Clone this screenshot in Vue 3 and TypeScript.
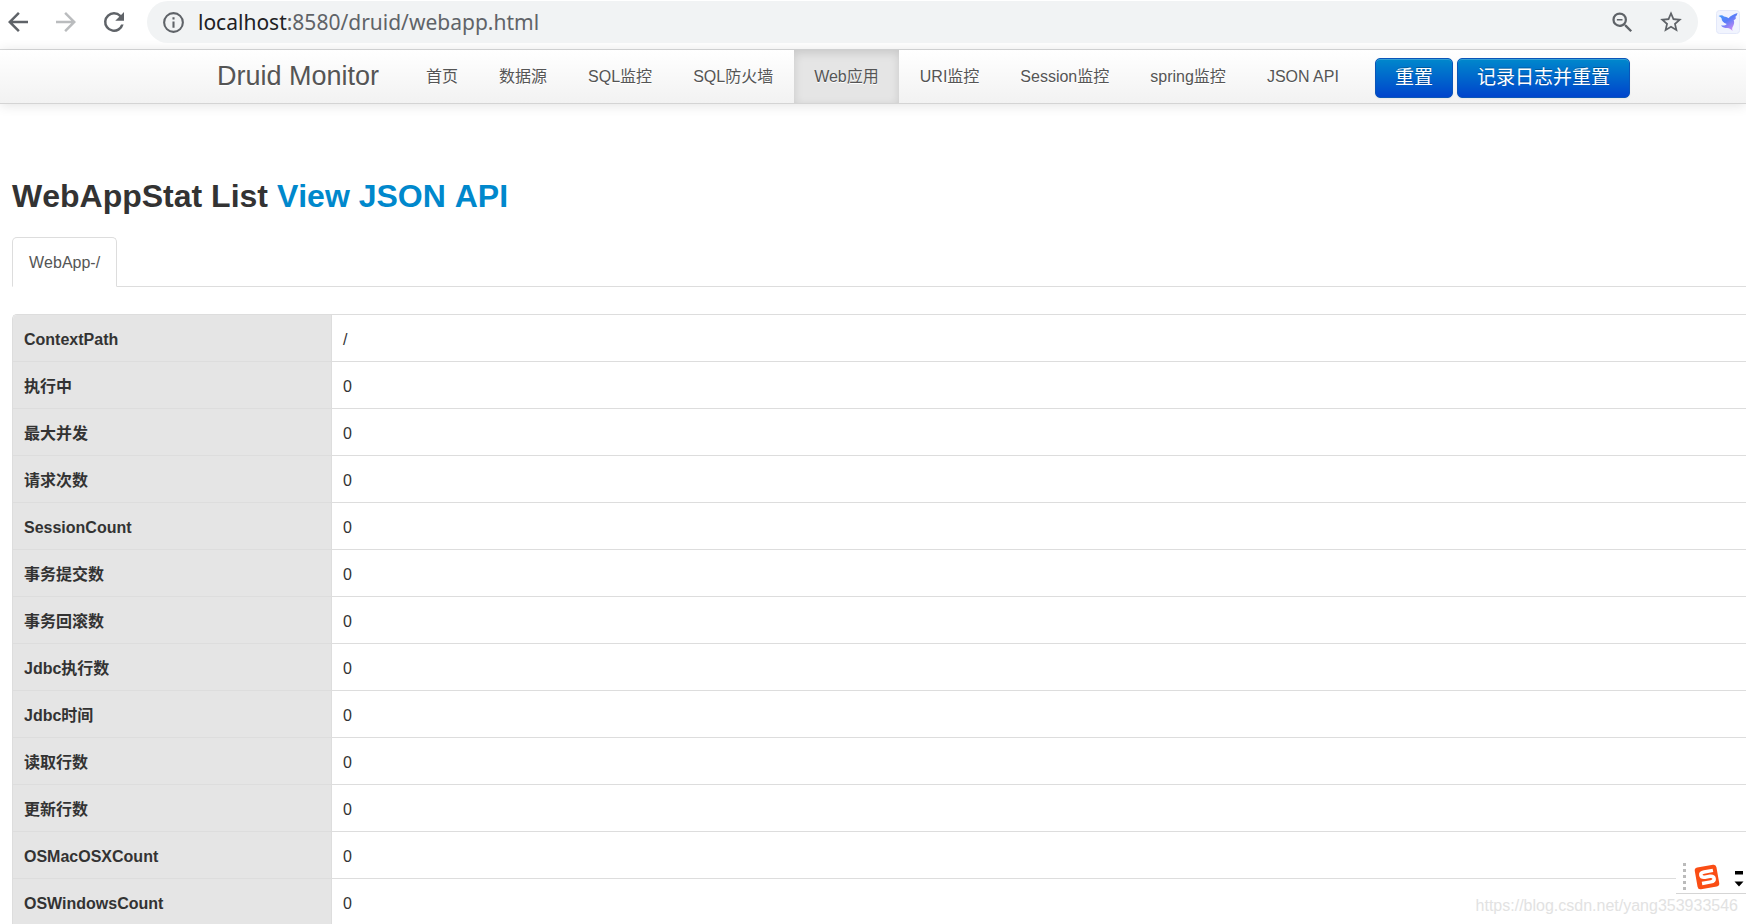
<script setup lang="ts">
interface NavItem {
  label: string
  active?: boolean
}

interface StatRow {
  name: string
  value: string
}

const navItems: NavItem[] = [
  { label: '首页' },
  { label: '数据源' },
  { label: 'SQL监控' },
  { label: 'SQL防火墙' },
  { label: 'Web应用', active: true },
  { label: 'URI监控' },
  { label: 'Session监控' },
  { label: 'spring监控' },
  { label: 'JSON API' },
]

const rows: StatRow[] = [
  { name: 'ContextPath', value: '/' },
  { name: '执行中', value: '0' },
  { name: '最大并发', value: '0' },
  { name: '请求次数', value: '0' },
  { name: 'SessionCount', value: '0' },
  { name: '事务提交数', value: '0' },
  { name: '事务回滚数', value: '0' },
  { name: 'Jdbc执行数', value: '0' },
  { name: 'Jdbc时间', value: '0' },
  { name: '读取行数', value: '0' },
  { name: '更新行数', value: '0' },
  { name: 'OSMacOSXCount', value: '0' },
  { name: 'OSWindowsCount', value: '0' },
]
</script>

<template>
  <div class="window">
    <div class="toolbar">
      <button class="tool" type="button" aria-label="Back">
        <svg viewBox="0 0 24 24" width="30" height="30"><path fill="#5f6368" d="M20 11H7.83l5.59-5.59L12 4l-8 8 8 8 1.41-1.41L7.83 13H20v-2z" /></svg>
      </button>
      <button class="tool" type="button" aria-label="Forward" disabled>
        <svg viewBox="0 0 24 24" width="30" height="30"><path fill="#babcbe" d="M12 4l-1.41 1.41L16.17 11H4v2h12.17l-5.58 5.59L12 20l8-8z" /></svg>
      </button>
      <button class="tool" type="button" aria-label="Reload">
        <svg viewBox="0 0 24 24" width="30" height="30"><path fill="#5f6368" d="M17.65 6.35A7.96 7.96 0 0 0 12 4a8 8 0 1 0 7.73 10h-2.08A6 6 0 1 1 12 6c1.66 0 3.14.69 4.22 1.78L13 11h7V4z" /></svg>
      </button>
      <div class="omnibox">
        <svg viewBox="0 0 24 24" width="25" height="25"><path fill="#5f6368" d="M11 7h2v2h-2zm0 4h2v6h-2zm1-9a10 10 0 1 0 0 20 10 10 0 0 0 0-20zm0 18a8 8 0 1 1 0-16 8 8 0 0 1 0 16z" /></svg>
        <div class="url"><span class="host">localhost</span>:8580/druid/webapp.html</div>
        <button class="tool" type="button" aria-label="Zoom">
          <svg viewBox="0 0 24 24" width="27" height="27"><path fill="#5f6368" d="M15.500 14h-.790l-.280-.270A6.470 6.470 0 0 0 16 9.500 6.500 6.500 0 1 0 9.500 16c1.610 0 3.090-.590 4.230-1.570l.270.280v.790l5 4.990L20.490 19zm-6 0a4.500 4.500 0 1 1 0-9 4.500 4.500 0 0 1 0 9zM7 8.800h5v1.400H7z" /></svg>
        </button>
        <button class="tool" type="button" aria-label="Bookmark">
          <svg viewBox="0 0 24 24" width="26" height="26"><path fill="#5f6368" d="M22 9.240l-7.190-.620L12 2 9.190 8.630 2 9.240l5.460 4.730L5.820 21 12 17.270 18.180 21l-1.630-7.030zM12 15.400l-3.760 2.270 1-4.280-3.320-2.880 4.380-.380L12 6.100l1.710 4.040 4.380.380-3.320 2.880 1 4.280z" /></svg>
        </button>
      </div>
      <button class="tool" type="button" aria-label="Extension">
        <svg viewBox="0 0 24 24" width="24" height="24">
          <defs><linearGradient id="bird" x1="0" y1="0" x2=".7" y2="1"><stop offset="0" stop-color="#3fa4ff" /><stop offset=".5" stop-color="#5b7cf8" /><stop offset="1" stop-color="#d08bf5" /></linearGradient></defs>
          <rect x=".5" y=".5" width="23" height="23" rx="3" fill="#f1f4fe" stroke="#e3e8fa" />
          <path fill="url(#bird)" d="M2.500 6c2-1 4-1 5.500.5 1.500.3 3 .6 4.500 1.800C14.500 5.500 17.500 4.500 21.500 3c-.5 2-1 3-2.500 4.200l1.200.3c-.5 1.300-1.300 2.200-2.500 2.800.7 1.700.6 3.700-.4 5.400-1 1.600-1.500 2.800-.8 5.300-1.500-1.600-2.800-2.700-5-2.900-2.800-.1-5-.8-6.500-2.600 3 .4 4.700-.2 5.700-1.500C7.500 13 5.700 11 5.500 8.200 4.800 7.200 4 6.500 2.500 6z" />
        </svg>
      </button>
    </div>

    <header class="navbar">
      <a class="brand" href="#">Druid Monitor</a>
      <nav>
        <a v-for="item in navItems" :key="item.label" href="#" :class="{ active: item.active }">{{ item.label }}</a>
      </nav>
      <div class="actions">
        <button class="btn" type="button">重置</button>
        <button class="btn" type="button">记录日志并重置</button>
      </div>
    </header>

    <main>
      <h1>WebAppStat List <a href="#">View JSON API</a></h1>
      <div class="tabs"><a class="tab" href="#">WebApp-/</a></div>
      <table>
        <tbody>
          <tr v-for="row in rows" :key="row.name">
            <th scope="row">{{ row.name }}</th>
            <td>{{ row.value }}</td>
          </tr>
        </tbody>
      </table>
    </main>

    <div class="ime">
      <svg viewBox="0 0 70 32" width="70" height="32">
        <path d="M8.500 2v28" stroke="#bbb" stroke-width="3" stroke-dasharray="3 3" />
        <g transform="rotate(-10 31 16)"><rect x="20" y="5" width="22" height="22" rx="3" fill="#fa4d14" /><path fill="none" stroke="#fff" stroke-width="3.500" d="M38 10.500H29c-5 0-5 5 0 5.300h5c5 .3 5 5.700 0 5.700h-9" /></g>
        <path fill="#000" d="M59 10h8v3.500h-8zM58.500 20.500h9l-4.500 5z" />
      </svg>
    </div>
    <div class="watermark">https://blog.csdn.net/yang353933546</div>
  </div>
</template>

<style>
body {
  margin: 0;
  overflow: hidden;
}
</style>

<style scoped>
.window {
  position: relative;
  height: 100vh;
  overflow: hidden;
  background: #fff;
  color: #333;
  font: 16px/26px "Liberation Sans", "Noto Sans CJK SC", sans-serif;
}
a {
  text-decoration: none;
}
svg {
  display: block;
}
.toolbar {
  display: flex;
  align-items: center;
  height: 50px;
  padding: 0 6px 5px 3px;
  box-sizing: border-box;
  gap: 18px;
  border-bottom: 1px solid #d9dadb;
}
.tool {
  display: flex;
  padding: 0;
  border: 0;
  background: none;
}
.omnibox {
  display: flex;
  flex: 1;
  align-items: center;
  gap: 22px;
  height: 42px;
  padding: 0 14px;
  border-radius: 21px;
  background: #f1f3f4;
}
.url {
  flex: 1;
  margin-left: -10px;
  color: #5f6368;
  font: 21px/30px "Noto Sans", sans-serif;
}
.host {
  color: #202124;
}
.navbar {
  display: flex;
  height: 53px;
  padding-left: 217px;
  border-bottom: 1px solid #d4d4d4;
  background: linear-gradient(#fff, #f2f2f2);
  box-shadow: 0 1px 12px rgba(0, 0, 0, 0.12);
}
.brand {
  margin-right: 27px;
  color: #555;
  font-size: 27px;
  line-height: 52px;
  text-shadow: 0 1px 0 #fff;
}
nav {
  display: flex;
  gap: 1px;
}
nav a {
  padding: 0 20px;
  color: #555;
  line-height: 53px;
  text-shadow: 0 1px 0 #fff;
}
nav .active {
  background: #e5e5e5;
  box-shadow: inset 0 3px 10px rgba(0, 0, 0, 0.13);
}
.actions {
  display: flex;
  gap: 4px;
  align-items: center;
  margin: 3px 0 0 16px;
}
.btn {
  height: 40px;
  padding: 0 19px;
  border: 1px solid #0a55b8;
  border-radius: 5px;
  background: linear-gradient(#08c, #04c);
  box-shadow: inset 0 1px 0 rgba(255, 255, 255, 0.2), 0 1px 2px rgba(0, 0, 0, 0.05);
  color: #fff;
  font: 19px/26px "Liberation Sans", "Noto Sans CJK SC", sans-serif;
  text-shadow: 0 -1px 0 rgba(0, 0, 0, 0.25);
}
main {
  padding: 66px 0 0 12px;
}
h1 {
  margin: 0;
  font-size: 32px;
  line-height: 52px;
  font-kerning: none;
}
h1 a {
  color: #08c;
}
.tabs {
  display: flex;
  margin: 15px 0 27px;
  border-bottom: 1px solid #ddd;
}
.tab {
  margin-bottom: -1px;
  padding: 12px 16px 10px;
  border: 1px solid #ddd;
  border-bottom-color: #fff;
  border-radius: 5px 5px 0 0;
  background: #fff;
  color: #555;
  font-kerning: none;
}
table {
  width: 100%;
  border: 1px solid #ddd;
  border-right: 0;
  border-radius: 5px 0 0 0;
  border-spacing: 0;
  overflow: hidden;
}
th,
td {
  height: 43px;
  padding: 3px 11px 0;
  border-top: 1px solid #ddd;
  text-align: left;
}
tr:first-child > * {
  border-top: 0;
}
th {
  width: 296px;
  background: #e5e5e5;
  font-weight: 700;
}
td {
  border-left: 1px solid #ddd;
}
.ime {
  position: absolute;
  right: 0;
  bottom: 30px;
  border-bottom: 1px solid #d5d5d5;
  background: #fff;
}
.watermark {
  position: absolute;
  right: 8px;
  bottom: 5px;
  color: #e2e2e2;
  line-height: 26px;
}
</style>
